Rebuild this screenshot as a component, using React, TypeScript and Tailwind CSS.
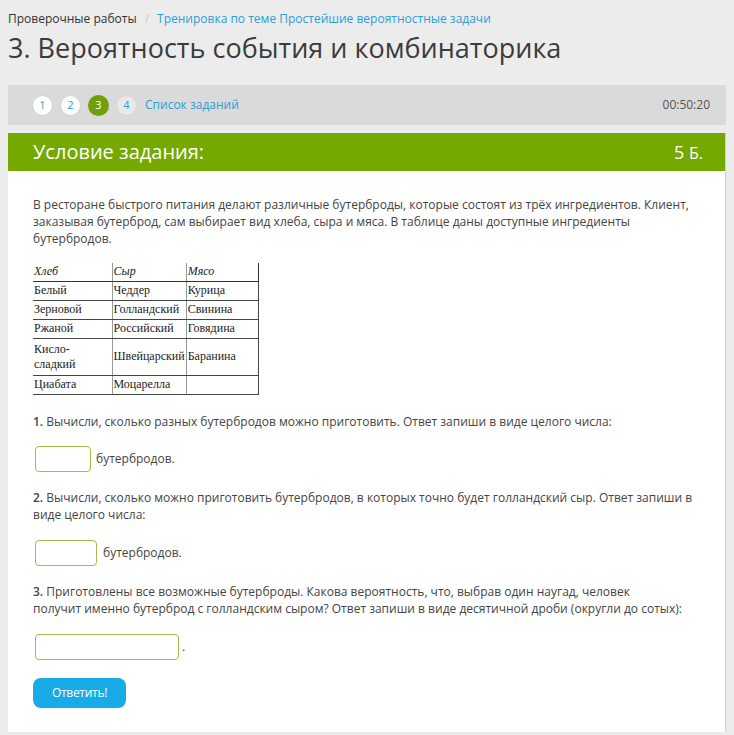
import React from 'react';

const rows = [
  ['Белый', 'Чеддер', 'Курица'],
  ['Зерновой', 'Голландский', 'Свинина'],
  ['Ржаной', 'Российский', 'Говядина'],
  ['Кисло-сладкий', 'Швейцарский', 'Баранина'],
  ['Циабата', 'Моцарелла', ''],
];

function Step({ n, state }: { n: number; state: 'done' | 'active' | 'todo' }) {
  const cls =
    state === 'active'
      ? 'bg-[#6f9f0a] text-white'
      : state === 'done'
        ? 'bg-white text-[#2a9fd6] border border-[#d0d0d0]'
        : 'bg-[#e9e9e9] text-[#2a9fd6] border border-[#d6d6d6]';
  return (
    <span className={`w-[21px] h-[21px] rounded-full flex items-center justify-center text-[11px] ${cls}`}>{n}</span>
  );
}

function AnswerInput({ width }: { width: string }) {
  return <input type="text" className={`${width} h-[26px] rounded-[4px] border border-[#a8b946] bg-white outline-none`} />;
}

export default function App() {
  return (
    <div
      className="min-h-screen bg-[#ececec] text-[#444] pb-[3px]"
      style={{ fontFamily: '"Open Sans", "Noto Sans", sans-serif' }}
    >
      {/* Breadcrumbs */}
      <div className="px-2 pt-[10px] text-[12px] leading-[18px] flex items-center">
        <span className="text-[#333]">Проверочные работы</span>
        <span className="text-[#c8c8c8] mx-[8px]">/</span>
        <span className="text-[#2a9fd6]">Тренировка по теме Простейшие вероятностные задачи</span>
      </div>
      <h1 className="px-2 mt-[2px] text-[27px] leading-[36px] text-[#3b3b3b] font-normal">
        3. Вероятность события и комбинаторика
      </h1>

      {/* Task navigation */}
      <div className="mx-2 mt-[19px] h-[40px] bg-[#dadada] flex items-center pl-[24px] pr-[16px]">
        <div className="flex items-center gap-[7px]">
          <Step n={1} state="done" />
          <Step n={2} state="done" />
          <Step n={3} state="active" />
          <Step n={4} state="todo" />
        </div>
        <span className="ml-[8px] text-[12px] text-[#2a9fd6]">Список заданий</span>
        <span className="ml-auto text-[12px] text-[#555]">00:50:20</span>
      </div>

      {/* Task card */}
      <div className="mx-2 mt-[8px] bg-white border-r border-[#d0d0d0]">
        <div className="h-[38px] bg-[#76a900] flex items-center justify-between pl-[25px] pr-[22px] text-white">
          <span className="text-[20px]">Условие задания:</span>
          <span className="text-[18px] font-medium">
            5 <span className="text-[16px] font-normal">Б.</span>
          </span>
        </div>

        <div className="px-[25px] pt-[25px] pb-[24px] text-[12px] leading-[17px]">
          <p>
            В ресторане быстрого питания делают различные бутерброды, которые состоят из трёх ингредиентов. Клиент,
            заказывая бутерброд, сам выбирает вид хлеба, сыра и мяса. В таблице даны доступные ингредиенты
            бутербродов.
          </p>

          <table
            className="mt-[16px] border-collapse text-[12px] leading-[15px] text-[#222]"
            style={{ fontFamily: '"Liberation Serif", "DejaVu Serif", serif' }}
          >
            <thead>
              <tr className="h-[18px]">
                <th className="w-[79px] text-left font-normal italic px-[1px] border-b border-[#333]">Хлеб</th>
                <th className="w-[74px] text-left font-normal italic px-[1px] border-b border-l border-[#333] border-l-[#999]">Сыр</th>
                <th className="w-[72px] text-left font-normal italic px-[1px] border-b border-l border-r border-[#333] border-l-[#999]">Мясо</th>
              </tr>
            </thead>
            <tbody>
              {rows.map(r => (
                <tr key={r[0]} className={r[0] === 'Кисло-сладкий' ? 'h-[37px]' : 'h-[19px]'}>
                  <td className="px-[1px] border-b border-[#444] align-middle">
                    {r[0] === 'Кисло-сладкий' ? (
                      <>
                        Кисло-
                        <br />
                        сладкий
                      </>
                    ) : (
                      r[0]
                    )}
                  </td>
                  <td className="px-[1px] border-b border-l border-[#444] border-l-[#999]">{r[1]}</td>
                  <td className="px-[1px] border-b border-l border-r border-[#444] border-l-[#999]">{r[2]}</td>
                </tr>
              ))}
            </tbody>
          </table>

          <p className="mt-[18px]">
            <span className="font-semibold">1.</span> Вычисли, сколько разных бутербродов можно приготовить. Ответ
            запиши в виде целого числа:
          </p>
          <div className="mt-[16px] ml-[2px] flex items-center gap-[5px]">
            <AnswerInput width="w-[56px]" />
            <span>бутербродов.</span>
          </div>

          <p className="mt-[17px]">
            <span className="font-semibold">2.</span> Вычисли, сколько можно приготовить бутербродов, в которых точно
            будет голландский сыр. Ответ запиши в виде целого числа:
          </p>
          <div className="mt-[17px] ml-[2px] flex items-center gap-[6px]">
            <AnswerInput width="w-[62px]" />
            <span>бутербродов.</span>
          </div>

          <p className="mt-[17px]">
            <span className="font-semibold">3.</span> Приготовлены все возможные бутерброды. Какова вероятность, что,
            выбрав один наугад, человек
            <br />
            получит именно бутерброд с голландским сыром? Ответ запиши в виде десятичной дроби (округли до сотых):
          </p>
          <div className="mt-[17px] ml-[2px] flex items-center gap-[3px]">
            <AnswerInput width="w-[144px]" />
            <span>.</span>
          </div>

          <button
            type="button"
            className="mt-[18px] w-[93px] h-[30px] rounded-[8px] bg-[#17ace8] text-white text-[12px] tracking-[-0.3px]"
          >
            Ответить!
          </button>
        </div>
      </div>
    </div>
  );
}
